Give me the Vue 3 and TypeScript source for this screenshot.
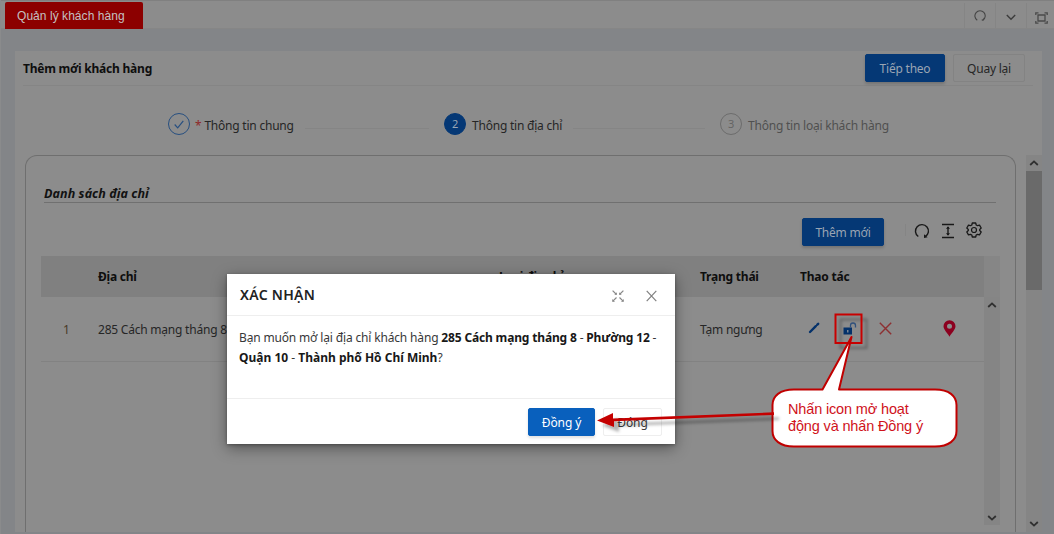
<script setup lang="ts">
interface Step {
  index: number
  label: string
  state: 'done' | 'active' | 'waiting'
  required?: boolean
}

const steps: Step[] = [
  { index: 1, label: 'Thông tin chung', state: 'done', required: true },
  { index: 2, label: 'Thông tin địa chỉ', state: 'active' },
  { index: 3, label: 'Thông tin loại khách hàng', state: 'waiting' },
]

const columns: string[] = ['', 'Địa chỉ', 'Loại địa chỉ', 'Trạng thái', 'Thao tác']
</script>

<template>
  <div class="screen">
    <header class="tabs">
      <div class="tab"><span>Quản lý khách hàng</span></div>
      <div class="tools">
        <i class="tool"><svg width="12" height="12" viewBox="0 0 24 24"><path d="M6.5 20.500A10.300 10.300 0 1 1 18 20.300M20.500 16L18 20.500L15.500 19.500" fill="none" stroke="#454545" stroke-width="2.200" /></svg></i>
        <i class="tool chevron"><svg width="10" height="7" viewBox="0 0 10 7"><path d="M.8 1L5 5.300L9.200 1" fill="none" stroke="#3c3c3c" stroke-width="1.400" /></svg></i>
        <i class="tool full"><svg width="13" height="12" viewBox="0 0 13 12"><path d="M.8 3V.8H3.500M9.500 .8H12.200V3M12.200 9V11.200H9.500M3.500 11.200H.8V9M3 3H10V9H3Z" fill="none" stroke="#4a4a4a" stroke-width="1.300" /></svg></i>
      </div>
    </header>

    <main class="card">
      <div class="card-head">
        <h1>Thêm mới khách hàng</h1>
        <button class="btn primary next">Tiếp theo</button>
        <button class="btn back">Quay lại</button>
      </div>

      <div class="steps">
        <div v-for="s in steps" :key="s.index" class="step" :class="s.state">
          <span class="dot">
            <svg v-if="s.state === 'done'" width="10" height="9" viewBox="0 0 10 9"><path d="M.7 4.500L3.700 7.800L9.300 .8" fill="none" stroke="#274f80" stroke-width="1.200" /></svg>
            <template v-else>{{ s.index }}</template>
          </span>
          <em v-if="s.required">*</em>
          <span class="label">{{ s.label }}</span>
          <span v-if="s.index < 3" class="rail"></span>
        </div>
      </div>

      <div class="body">
        <section class="panel">
          <h2>Danh sách địa chỉ</h2>
          <div class="toolbar">
            <button class="btn primary add">Thêm mới</button>
            <span class="divider"></span>
            <svg class="reload" width="16" height="16" viewBox="0 0 16 16"><path d="M4.300 13.500A6.500 6.500 0 1 1 11.300 13.700" fill="none" stroke="#181818" stroke-width="1.400" /><path d="M10 11.300V15L13.600 14.300Z" fill="#181818" /></svg>
            <svg class="height" width="14" height="16" viewBox="0 0 14 16"><path d="M1 1.500H13M1 14.500H13M7 4V12" fill="none" stroke="#181818" stroke-width="1.400" /><path d="M5 5.800L7 3.300L9 5.800ZM5 10.200L7 12.700L9 10.200Z" fill="#181818" /></svg>
            <svg class="gear" width="16" height="16" viewBox="0 0 16 16"><path d="M6.300 1H9.700L10.200 3L11.500 3.700L13.500 3.100L15.200 6L13.700 7.400V8.600L15.200 10L13.500 12.900L11.500 12.300L10.200 13L9.700 15H6.300L5.800 13L4.500 12.300L2.500 12.900L.8 10L2.300 8.600V7.400L.8 6L2.500 3.100L4.500 3.700L5.800 3Z" fill="none" stroke="#181818" stroke-width="1.300" stroke-linejoin="round" /><circle cx="8" cy="8" r="2.500" fill="none" stroke="#181818" stroke-width="1.200" /></svg>
          </div>
          <div class="table">
            <div class="row head">
              <span v-for="c in columns" :key="c">{{ c }}</span>
            </div>
            <div class="gutter"></div>
            <div class="row data">
              <span class="num">1</span>
              <span>285 Cách mạng tháng 8</span>
              <span></span>
              <span>Tạm ngưng</span>
              <span class="actions">
                <svg class="pen" width="12" height="12" viewBox="0 0 12 12"><path d="M2 10L7.800 4.200M9.300 2.700L10.200 1.800" stroke="#04316a" stroke-width="2.400" stroke-linecap="round" /></svg>
                <svg class="lock" width="14" height="13" viewBox="0 0 14 13"><path d="M.5 5.500H9V12.500H.5Z" fill="#04316a" /><path d="M7.500 5.500V3.500A2.500 2.500 0 0 1 12.500 3.500V5.500" fill="none" stroke="#31527d" stroke-width="1.300" /><path d="M4 8H5.500V10.500H4Z" fill="#7d8794" /></svg>
                <svg class="del" width="13" height="13" viewBox="0 0 13 13"><path d="M.8 .8L12.200 12.200M12.200 .8L.8 12.200" stroke="#8d2f31" stroke-width="1.400" /></svg>
                <svg class="pin" width="13" height="17" viewBox="0 0 13 17"><path fill-rule="evenodd" d="M6.500 .3A6 6 0 0 0 .5 6.300C.5 9.600 4.600 13.200 6.500 16.700C8.400 13.200 12.500 9.600 12.500 6.300A6 6 0 0 0 6.500 .3ZM6.500 3.700A2.500 2.500 0 1 1 6.500 8.700A2.500 2.500 0 0 1 6.500 3.700Z" fill="#8c001f" /></svg>
              </span>
            </div>
            <div class="vbar">
              <svg width="10" height="6" viewBox="0 0 10 6"><path d="M1.200 5L5 1.400L8.800 5" fill="none" stroke="#303030" stroke-width="1.800" /></svg>
              <svg width="10" height="6" viewBox="0 0 10 6"><path d="M1.200 1L5 4.600L8.800 1" fill="none" stroke="#303030" stroke-width="1.800" /></svg>
            </div>
          </div>
        </section>
        <div class="page-bar">
          <svg width="10" height="6" viewBox="0 0 10 6"><path d="M1.200 5L5 1.400L8.800 5" fill="none" stroke="#303030" stroke-width="1.800" /></svg>
          <div class="thumb"></div>
          <svg width="10" height="6" viewBox="0 0 10 6"><path d="M1.200 1L5 4.600L8.800 1" fill="none" stroke="#303030" stroke-width="1.800" /></svg>
        </div>
      </div>
    </main>

    <div class="modal">
      <div class="modal-head">
        <h3>XÁC NHẬN</h3>
        <svg class="shrink" width="12" height="12" viewBox="0 0 12 12"><path d="M.6 .6L4.500 4.500M11.400 .6L7.500 4.500M.6 11.400L4.500 7.500M11.400 11.400L7.500 7.500" stroke="#888" stroke-width="1.200" /><path d="M2.300 4.800H4.800V2.300ZM9.700 4.800H7.200V2.300ZM.3 11.700V9L3 11.700ZM11.700 11.700H9L11.700 9Z" fill="#888" /></svg>
        <svg width="11" height="12" viewBox="0 0 11 12"><path d="M.7 .9L10.300 11.100M10.300 .9L.7 11.100" stroke="#808080" stroke-width="1.200" /></svg>
      </div>
      <div class="modal-body">
        <p>Bạn muốn mở lại địa chỉ khách hàng <b>285 Cách mạng tháng 8</b> - <b>Phường 12</b> -</p>
        <p class="second"><b>Quận 10</b> - <b>Thành phố Hồ Chí Minh</b>?</p>
      </div>
      <div class="modal-foot">
        <button class="btn ok">Đồng ý</button>
        <button class="btn close">Đóng</button>
      </div>
    </div>

    <svg class="notes" width="1054" height="534" viewBox="0 0 1054 534">
      <defs>
        <filter id="drop" x="-20%" y="-50%" width="150%" height="250%">
          <feDropShadow dx="5" dy="5" stdDeviation="1.500" flood-color="#000" flood-opacity=".3" />
        </filter>
      </defs>
      <rect x="835.500" y="314.500" width="26" height="28.500" fill="none" stroke="#c80000" stroke-width="2" filter="url(#drop)" />
      <path d="M794 389.500H822.500L851.500 337L839 389.500H935C949 389.500 956.500 396 956.500 405V431C956.500 440 949 446.500 935 446.500H794C780 446.500 772.500 440 772.500 431V405C772.500 396 780 389.500 794 389.500Z" fill="#fff" stroke="#c00000" stroke-width="2" stroke-linejoin="round" />
      <g filter="url(#drop)">
        <path d="M774 412.300L613 418.500V413L597 420.500L614 427V421.200L774 414.900Z" fill="#c40000" />
      </g>
      <g class="note-text">
        <text x="788" y="414">Nhấn icon mở hoạt</text>
        <text x="788" y="431">động và nhấn Đồng ý</text>
      </g>
    </svg>
  </div>
</template>

<style>
body { background: #848689; }
</style>

<style scoped>
* { box-sizing: border-box; }
.screen { position: relative; width: 1054px; height: 534px; overflow: hidden; background: #838588; border-left: 1px solid #8a8b8c; font: 12px/18px "Noto Sans", "Open Sans", sans-serif; letter-spacing: -.22px; color: #262626; }
h1, h2, h3, p { margin: 0; }
svg { display: block; flex: none; }
.tabs { height: 29px; background: #8c8c8c; border-top: 1px solid #808080; border-bottom: 1px solid #868686; display: flex; justify-content: space-between; }
.tab { margin: 1px 0 0 4px; width: 138px; height: 27px; background: #8c0000; border-radius: 2px 2px 0 0; color: #c4c0c0; padding: 5px 0 0 12px; font-size: 12px; letter-spacing: .05px; white-space: nowrap; font-family: "Liberation Sans", sans-serif; }
.tools { display: flex; padding-top: 2px; }
.tool { width: 31px; height: 25px; border-left: 1px solid #858585; display: flex; align-items: center; justify-content: center; }
.tool.chevron { padding-top: 3px; }
.tool.full { width: 28px; padding: 4px 0 0 1px; }
.card { margin: 22px 12px 0 14px; height: 481px; background: #8c8c8c; }
.card-head { margin: 0 9px 0 8px; height: 35px; border-bottom: 1px solid #858585; display: flex; align-items: flex-start; padding: 3px 8px 0 0; }
h1 { font-size: 12px; line-height: 18px; margin: 6px auto 0 0; color: #0e0e0e; font-weight: 700; }
.btn { font: inherit; letter-spacing: inherit; height: 28px; border-radius: 2px; border: 1px solid #838383; background: #8c8c8c; color: #262626; padding: 1px 0 0; text-align: center; white-space: nowrap; }
.primary { background: #053875; border-color: #053875; color: #9aa5b3; box-shadow: 0 2px 3px rgba(0, 0, 0, .18); }
.next { width: 80px; margin-right: 8px; }
.back { width: 72px; }
.steps { height: 69px; display: grid; grid-template-columns: 276px 276px 1fr; padding: 27px 0 0 153px; }
.step { display: flex; align-items: flex-start; padding-right: 15px; white-space: nowrap; }
.dot { width: 22px; height: 22px; border-radius: 50%; border: 1px solid #274f80; display: flex; align-items: center; justify-content: center; font-size: 11px; margin-right: 6px; flex: none; }
.active .dot { background: #053875; border-color: #053875; color: #98a5b5; }
.waiting .dot { border-color: #6c6c6c; color: #646464; }
.label { padding-top: 4px; }
.waiting .label { color: #505050; }
.step em { font-style: normal; color: #8f2828; margin: 4px 3px 0 -1px; }
.rail { flex: 1; height: 1px; background: #858585; margin: 15px 0 0 11px; }
.body { display: flex; justify-content: space-between; height: 377px; }
.panel { width: 991px; margin-left: 10px; border: 1px solid #6f6f6f; border-bottom: 0; border-radius: 12px 12px 0 0; padding: 29px 15px 0 15px; }
h2 { font-size: 12.500px; line-height: 17px; letter-spacing: .08px; font-style: italic; font-weight: 700; border-bottom: 1px solid #707070; margin: 0 4px 0 3px; color: #121212; }
.toolbar { display: flex; height: 53px; padding: 15px 18px 0 0; justify-content: flex-end; align-items: flex-start; }
.add { width: 82px; }
.divider { width: 1px; height: 12px; background: #858585; margin: 6px 8px 0 21px; }
.reload { margin-top: 5px; }
.height { margin: 5px 0 0 11px; }
.gear { margin: 4px 0 0 11px; }
.table { display: grid; grid-template-columns: 943px 16px; grid-template-rows: 41px 228px; align-items: start; }
.row { display: grid; grid-template-columns: 57px 401px 201px 100px 184px; align-items: center; }
.head { height: 41px; background: #808080; color: #0e0e0e; font-weight: 700; }
.gutter { height: 41px; background: #868686; }
.data { height: 65px; border-bottom: 1px solid #828282; padding-top: 2px; }
.num { padding-left: 22px; color: #493a28; }
.actions { display: flex; align-items: center; padding: 0 0 4px 8px; }
.lock { margin-left: 23px; }
.del { margin-left: 22px; }
.pin { margin-left: 51px; }
.vbar { height: 228px; background: #858585; display: flex; flex-direction: column; align-items: center; justify-content: space-between; padding: 5px 0 4px; }
.page-bar { width: 16px; background: #858585; display: flex; flex-direction: column; align-items: center; padding: 5px 0; }
.thumb { width: 16px; height: 119px; background: #6a6a6a; margin: 5px 0 auto; }
.modal { position: absolute; left: 226px; top: 274px; width: 448px; height: 170px; background: #fff; box-shadow: 0 4px 14px rgba(0, 0, 0, .4), 0 1px 3px rgba(0, 0, 0, .3); }
.modal-head { height: 42px; border-bottom: 1px solid #eee; display: flex; align-items: center; padding: 3px 18px 0 13px; }
h3 { font-size: 14px; line-height: 20px; letter-spacing: .3px; font-weight: 600; color: #222; margin: -3px auto 0 0; }
.shrink { margin-right: 22px; }
.modal-body { height: 82px; padding: 13px 12px 0; white-space: nowrap; color: #383838; letter-spacing: -.16px; }
.modal-body p { height: 19.500px; }
.modal-body .second { letter-spacing: 0; }
.modal-body b { color: #181818; }
.modal-foot { height: 46px; border-top: 1px solid #eee; padding: 9px 13px; display: flex; justify-content: flex-end; gap: 8px; letter-spacing: -.1px; }
.ok { width: 67px; background: #0960bd; border-color: #0960bd; color: #fff; box-shadow: 0 2px 3px rgba(0, 0, 0, .12); }
.close { width: 59px; background: #fff; border-color: #eee; color: #3c3c3c; }
.notes { position: absolute; left: -1px; top: 0; pointer-events: none; }
.note-text { font: 14.500px "Liberation Sans", sans-serif; letter-spacing: -.15px; fill: #d0121b; }
</style>
